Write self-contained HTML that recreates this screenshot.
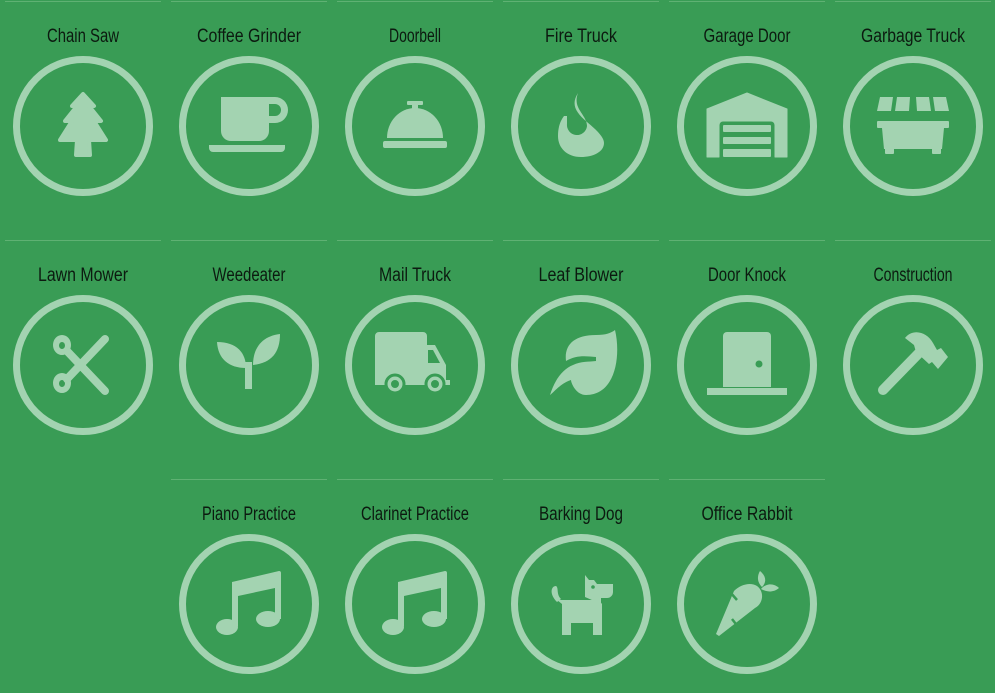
<!DOCTYPE html>
<html><head><meta charset="utf-8"><style>
html,body{margin:0;padding:0;background:#399c55;}
svg{display:block}
text{font-family:"Liberation Sans",sans-serif;font-size:19px;fill:#0c1a10;text-anchor:middle}
</style></head><body>
<svg width="995" height="693" viewBox="0 0 995 693" xmlns="http://www.w3.org/2000/svg">
<defs>
<g id="c"><circle cx="0" cy="0" r="66.5" fill="none" stroke="#a3d3b1" stroke-width="7"/></g>
</defs>
<g stroke="#5fb173" stroke-width="1">
<line x1="5" y1="1.5" x2="161" y2="1.5"/><line x1="171" y1="1.5" x2="327" y2="1.5"/><line x1="337" y1="1.5" x2="493" y2="1.5"/><line x1="503" y1="1.5" x2="659" y2="1.5"/><line x1="669" y1="1.5" x2="825" y2="1.5"/><line x1="835" y1="1.5" x2="991" y2="1.5"/>
<line x1="5" y1="240.5" x2="161" y2="240.5"/><line x1="171" y1="240.5" x2="327" y2="240.5"/><line x1="337" y1="240.5" x2="493" y2="240.5"/><line x1="503" y1="240.5" x2="659" y2="240.5"/><line x1="669" y1="240.5" x2="825" y2="240.5"/><line x1="835" y1="240.5" x2="991" y2="240.5"/>
<line x1="171" y1="479.5" x2="327" y2="479.5"/><line x1="337" y1="479.5" x2="493" y2="479.5"/><line x1="503" y1="479.5" x2="659" y2="479.5"/><line x1="669" y1="479.5" x2="825" y2="479.5"/>
</g>
<g>
<text x="83" y="42" textLength="72" lengthAdjust="spacingAndGlyphs">Chain Saw</text><text x="249" y="42" textLength="104" lengthAdjust="spacingAndGlyphs">Coffee Grinder</text><text x="415" y="42" textLength="52" lengthAdjust="spacingAndGlyphs">Doorbell</text><text x="581" y="42" textLength="72" lengthAdjust="spacingAndGlyphs">Fire Truck</text><text x="747" y="42" textLength="87" lengthAdjust="spacingAndGlyphs">Garage Door</text><text x="913" y="42" textLength="104" lengthAdjust="spacingAndGlyphs">Garbage Truck</text>
<text x="83" y="281" textLength="90" lengthAdjust="spacingAndGlyphs">Lawn Mower</text><text x="249" y="281" textLength="73" lengthAdjust="spacingAndGlyphs">Weedeater</text><text x="415" y="281" textLength="72" lengthAdjust="spacingAndGlyphs">Mail Truck</text><text x="581" y="281" textLength="85" lengthAdjust="spacingAndGlyphs">Leaf Blower</text><text x="747" y="281" textLength="78" lengthAdjust="spacingAndGlyphs">Door Knock</text><text x="913" y="281" textLength="79" lengthAdjust="spacingAndGlyphs">Construction</text>
<text x="249" y="520" textLength="94" lengthAdjust="spacingAndGlyphs">Piano Practice</text><text x="415" y="520" textLength="108" lengthAdjust="spacingAndGlyphs">Clarinet Practice</text><text x="581" y="520" textLength="84" lengthAdjust="spacingAndGlyphs">Barking Dog</text><text x="747" y="520" textLength="91" lengthAdjust="spacingAndGlyphs">Office Rabbit</text>
</g>

<g fill="#a3d3b1">
<!-- tree -->
<g transform="translate(83,126)"><use href="#c"/>
<path d="M0,-32 L11,-20 L6,-20 L18,-5 L11,-5 L23,14 L6,14 L7,29 L-7,29 L-6,14 L-23,14 L-11,-5 L-18,-5 L-6,-20 L-11,-20 Z" stroke="#a3d3b1" stroke-width="4" stroke-linejoin="round"/></g>
<!-- cup -->
<g transform="translate(249,126)"><use href="#c"/>
<path d="M-28,-29 H20 V5 A10,10 0 0 1 10,15 H-18 A10,10 0 0 1 -28,5 Z"/>
<path fill-rule="evenodd" d="M18,-29 H26 A13,13 0 0 1 26,-3 H18 Z M18,-22 H26 A6,6 0 0 1 26,-10 H18 Z"/>
<path d="M-40,19 H36 V22 A4,4 0 0 1 32,26 H-36 A4,4 0 0 1 -40,22 Z"/></g>
<!-- bell -->
<g transform="translate(415,126)"><use href="#c"/>
<rect x="-8" y="-25" width="16" height="4" rx="1"/><rect x="-3" y="-22" width="6" height="6"/>
<path d="M-28,12 A28,30 0 0 1 28,12 Z"/><rect x="-32" y="15" width="64" height="7" rx="2"/></g>
<!-- flame -->
<g transform="translate(581,126)"><use href="#c"/>
<path d="M-3,-33 C-10,-22 -6,-14 6,-4 C18,6 23,12 23,17 C23,26 12,31 0,31 C-14,31 -23,22 -23,10 C-23,0 -20,-6 -17,-10 L-14,-10 L-14,-2 A10,10 0 0 0 6,0 C6,-8 -2,-14 -4,-22 C-5,-27 -4,-30 -3,-33 Z"/></g>
<!-- garage -->
<g transform="translate(747,126)"><use href="#c"/>
<path d="M0,-33 L40,-17 V31 H28 V-1 A4,4 0 0 0 24,-5 H-24 A4,4 0 0 0 -28,-1 V31 H-40 V-17 Z" stroke="#a3d3b1" stroke-width="1" stroke-linejoin="round"/>
<rect x="-24" y="-1" width="48" height="7" rx="1"/><rect x="-24" y="11" width="48" height="7" rx="1"/><rect x="-24" y="23" width="48" height="8" rx="1"/></g>
<!-- dumpster -->
<g transform="translate(913,126)"><use href="#c"/>
<path d="M-33,-29 H-20 L-22,-15 H-36 Z M-16,-29 H-3 L-4,-15 H-18 Z M3,-29 H16 L18,-15 H4 Z M20,-29 H33 L36,-15 H22 Z"/>
<rect x="-36" y="-5" width="72" height="7" rx="1"/>
<path d="M-31,2 H31 L29,23 H-29 Z"/><rect x="-28" y="20" width="9" height="8" rx="1"/><rect x="19" y="20" width="9" height="8" rx="1"/></g>

<!-- scissors -->
<g transform="translate(83,365)"><use href="#c"/>
<g stroke="#a3d3b1" stroke-width="8" stroke-linecap="round" fill="none"><line x1="-16" y1="14" x2="22" y2="-26"/><line x1="-16" y1="-14" x2="22" y2="26"/></g>
<path fill-rule="evenodd" d="M-21,-30 A9,10 0 1 1 -21,-10 A9,10 0 1 1 -21,-30 Z M-21,-23 A3,3.5 0 1 0 -21,-16 A3,3.5 0 1 0 -21,-23 Z"/>
<path fill-rule="evenodd" d="M-21,8 A9,10 0 1 1 -21,28 A9,10 0 1 1 -21,8 Z M-21,15 A3,3.5 0 1 0 -21,22 A3,3.5 0 1 0 -21,15 Z"/></g>
<!-- sprout -->
<g transform="translate(249,365)"><use href="#c"/>
<rect x="-4" y="-3" width="7" height="27"/>
<path d="M-32,-23 C-12,-23 -3,-12 -3,3 C-20,3 -31,-6 -32,-23 Z"/>
<path d="M31,-31 C31,-12 22,-2 4,0 C4,-18 14,-29 31,-31 Z"/></g>
<!-- truck -->
<g transform="translate(415,365)"><use href="#c"/>
<path d="M-40,-29 A4,4 0 0 1 -36,-33 H8 A4,4 0 0 1 12,-29 V-20 H20 L31,0 V15 H35 V20 H-40 Z"/>
<path d="M13,-15 H18 L25,-2 H13 Z" fill="#399c55"/>
<circle cx="-20" cy="19" r="9" stroke="#399c55" stroke-width="3"/><circle cx="-20" cy="19" r="4" fill="#399c55"/>
<circle cx="20" cy="19" r="9" stroke="#399c55" stroke-width="3"/><circle cx="20" cy="19" r="4" fill="#399c55"/></g>
<!-- leaf -->
<g transform="translate(581,365)"><use href="#c"/>
<path d="M34,-35 C40,-10 35,30 5,30 C-5,30 -10,18 -10,15 C-20,18 -28,28 -31,30 C-26,14 -18,4 -8,0 C0,-4 8,-3 15,-4 L15,-8 C4,-9 -5,-10 -15,-4 C-17,-20 -7,-30 15,-30 C25,-30 30,-32 34,-35 Z"/></g>
<!-- door -->
<g transform="translate(747,365)"><use href="#c"/>
<path d="M-24,22 V-29 A4,4 0 0 1 -20,-33 H20 A4,4 0 0 1 24,-29 V22 Z"/>
<circle cx="12" cy="-1" r="3.5" fill="#399c55"/><rect x="-40" y="23" width="80" height="7"/></g>
<!-- hammer -->
<g transform="translate(913,365)"><use href="#c"/>
<line x1="-30" y1="25" x2="6" y2="-12" stroke="#a3d3b1" stroke-width="10" stroke-linecap="round"/>
<path d="M-8,-27 C0,-37 14,-33 20,-22 L24,-15 L28,-17 L35,-8 L25,4 L19,-3 L16,-1 L3,-13 L1,-20 Z"/></g>

<!-- notes -->
<g transform="translate(249,604)"><use href="#c"/>
<path d="M-17,-22 L30,-33 A2,2 0 0 1 32,-31 V15 H26 V-16 L-11,-8 V22 H-17 Z"/>
<ellipse cx="-22" cy="23" rx="11" ry="8"/><ellipse cx="19" cy="15" rx="12" ry="8"/></g>
<g transform="translate(415,604)"><use href="#c"/>
<path d="M-17,-22 L30,-33 A2,2 0 0 1 32,-31 V15 H26 V-16 L-11,-8 V22 H-17 Z"/>
<ellipse cx="-22" cy="23" rx="11" ry="8"/><ellipse cx="19" cy="15" rx="12" ry="8"/></g>
<!-- dog -->
<g transform="translate(581,604)"><use href="#c"/>
<path d="M4,-29 L8,-24 H13 L16,-20 H32 V-12 A6,6 0 0 1 26,-6 H20 V0 L4,-7 Z"/>
<circle cx="12" cy="-17" r="1.8" fill="#399c55"/>
<path d="M-24,-4 H18 L21,0 V31 H12 V19 H-10 V31 H-19 V0 Z"/>
<path d="M-25,-18 C-30,-18 -32,-10 -24,-2 L-20,-5 C-25,-10 -22,-16 -25,-18 Z"/></g>
<!-- carrot -->
<g transform="translate(747,604)"><use href="#c"/>
<path d="M-31,30 L-13,-13 C-6,-20 4,-22 10,-18 C18,-12 16,0 8,4 L-28,32 Z"/>
<line x1="-17" y1="-12" x2="-10" y2="-4" stroke="#399c55" stroke-width="2.5"/>
<line x1="-15" y1="15" x2="-8" y2="24" stroke="#399c55" stroke-width="2.5"/>
<path d="M13,-33 C19,-28 20,-22 15,-17 C10,-22 10,-28 13,-33 Z"/>
<path d="M14,-15 C20,-22 28,-20 32,-16 C26,-11 19,-12 14,-15 Z"/></g>
</g>
</svg>
</body></html>
